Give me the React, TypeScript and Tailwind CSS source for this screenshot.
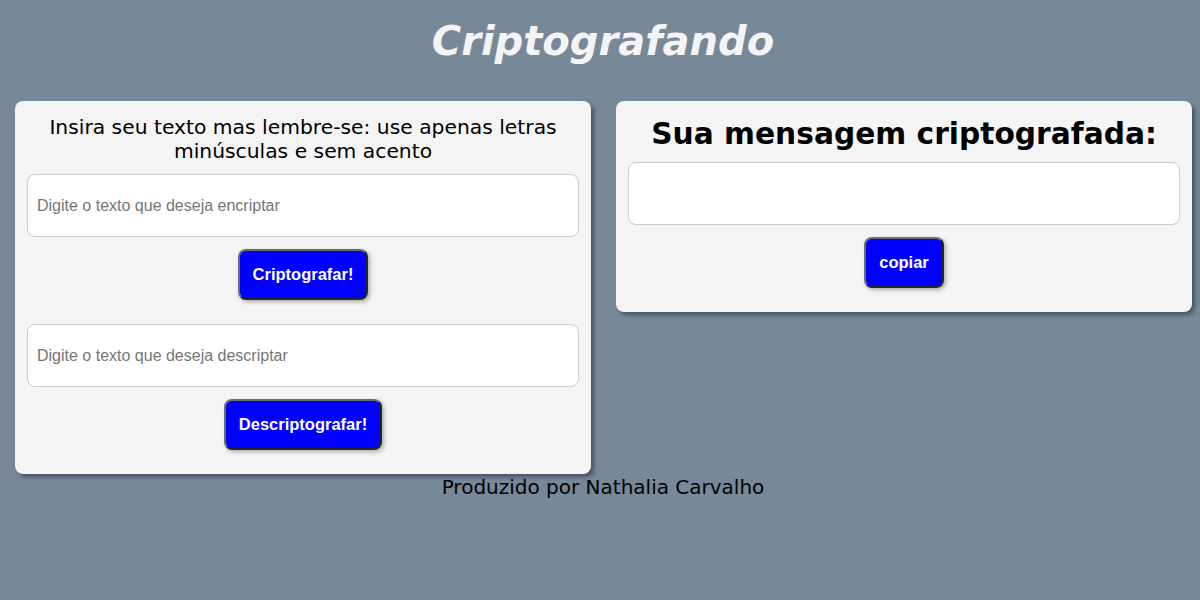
import React from 'react'

const btn =
  'h-[51px] px-[13px] rounded-[8px] bg-[#0000ff] text-white text-[16.5px] font-bold border-2 border-t-[#6e6e6e] border-l-[#6e6e6e] border-b-[#262626] border-r-[#262626] shadow-[2px_2px_4px_rgba(0,0,0,0.3)] [font-family:"Liberation_Sans",Arial,sans-serif]'

const field =
  'w-full h-[63px] px-[9px] rounded-[8px] border border-[#cccccc] bg-white text-[16px] outline-none placeholder:text-[#757575] [font-family:"Liberation_Sans",Arial,sans-serif]'

export default function App() {
  return (
    <div className="min-h-[600px] bg-[#778899] [font-family:'DejaVu_Sans',sans-serif] text-black">
      {/* título */}
      <header className="pt-[18px] pb-[37px] text-center">
        <h1 className="text-[40px] leading-[46px] font-bold italic text-[#f4f4f4] pl-[6px]">
          Criptografando
        </h1>
      </header>

      <main className="flex items-start gap-[25px] pl-[15px]">
        <section className="w-[576px] bg-[#f4f4f4] rounded-[8px] px-[12px] pt-[14px] pb-[24px] shadow-[3px_3px_4px_#4a5360] flex flex-col items-center">
          <p className="text-[20.3px] leading-[24px] text-center">
            Insira seu texto mas lembre-se: use apenas letras minúsculas e sem acento
          </p>
          <input className={`${field} mt-[11px]`} placeholder="Digite o texto que deseja encriptar" />
          <button className={`${btn} mt-[12px]`}>Criptografar!</button>
          <input className={`${field} mt-[24px]`} placeholder="Digite o texto que deseja descriptar" />
          <button className={`${btn} mt-[12px]`}>Descriptografar!</button>
        </section>

        <section className="w-[576px] bg-[#f4f4f4] rounded-[8px] px-[12px] pt-[14px] pb-[24px] shadow-[3px_3px_4px_#4a5360] flex flex-col items-center">
          <h2 className="text-[29.7px] leading-[37px] font-bold text-center">
            Sua mensagem criptografada:
          </h2>
          <input className={`${field} mt-[10px]`} readOnly />
          <button className={`${btn} mt-[12px]`}>copiar</button>
        </section>
      </main>

      <footer className="text-center text-[20px] leading-[24px] pt-[1px] pl-[6px]">
        Produzido por Nathalia Carvalho
      </footer>
    </div>
  )
}
